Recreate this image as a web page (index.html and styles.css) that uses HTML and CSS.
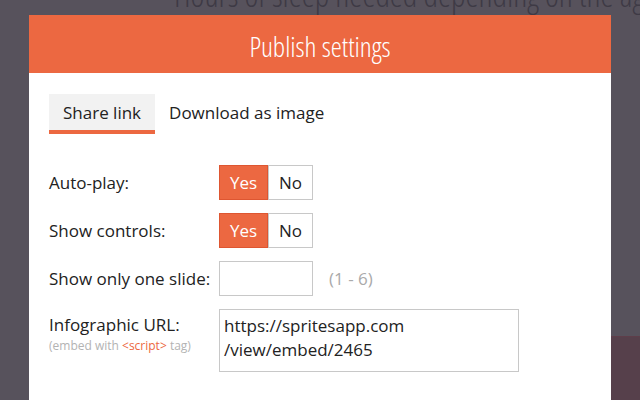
FILE: index.html
```html
<!DOCTYPE html>
<html>
<head>
<meta charset="utf-8">
<link rel="stylesheet" href="styles.css">
</head>
<body>
<div class="page">
  <h1 class="page-title">Hours of sleep needed depending on the age</h1>
  <div class="page-block"></div>
</div>
<div class="modal">
  <div class="modal-header">Publish settings</div>
  <div class="modal-body">
    <div class="tabs">
      <div class="tab active">Share link</div>
      <div class="tab">Download as image</div>
    </div>
    <div class="form">
      <div class="row">
        <div class="label">Auto-play:</div>
        <div class="toggle"><span class="opt on">Yes</span><span class="opt">No</span></div>
      </div>
      <div class="row">
        <div class="label">Show controls:</div>
        <div class="toggle"><span class="opt on">Yes</span><span class="opt">No</span></div>
      </div>
      <div class="row">
        <div class="label">Show only one slide:</div>
        <input class="num" type="text">
        <span class="hint">(1 - 6)</span>
      </div>
      <div class="row row-top">
        <div class="label">Infographic URL:<div class="sub">(embed with <span class="code">&lt;script&gt;</span> tag)</div></div>
        <textarea class="url" readonly>https://spritesapp.com
/view/embed/2465</textarea>
      </div>
    </div>
  </div>
</div>
</body>
</html>
```
FILE: styles.css
```css
html, body {
  margin: 0;
  padding: 0;
}
body {
  width: 640px;
  height: 400px;
  overflow: hidden;
  background: #57525c;
  font-family: "Open Sans", "Liberation Sans", sans-serif;
  position: relative;
}
.page {
  height: 400px;
  display: flex;
  flex-direction: column;
  justify-content: space-between;
  align-items: flex-end;
}
.page-title {
  margin: -26px 0 0 0;
  align-self: flex-start;
  padding-left: 174px;
  white-space: nowrap;
  font-family: "Open Sans", sans-serif;
  font-weight: 300;
  font-stretch: 75%;
  font-size: 33px;
  line-height: 42px;
  color: #3e3a45;
}
.page-block {
  width: 29px;
  height: 63px;
  background: #56404b;
  border-top: 1px solid #5e3e4a;
}
.modal {
  position: absolute;
  left: 29px;
  top: 15px;
  width: 582px;
  bottom: 0;
  background: #fff;
}
.modal-header {
  height: 58px;
  background: #ec6841;
  color: #fff;
  text-align: center;
  font-weight: 300;
  font-stretch: 75%;
  font-size: 28px;
  line-height: 62px;
}
.modal-body {
  padding: 21px 20px 0 20px;
}
.tabs {
  display: flex;
}
.tab {
  height: 36px;
  line-height: 38px;
  padding: 0 14px;
  font-size: 17px;
  color: #222;
  border-bottom: 4px solid transparent;
}
.tab.active {
  background: #f2f2f2;
  border-bottom-color: #ec6841;
}
.form {
  margin-top: 31px;
  display: flex;
  flex-direction: column;
  gap: 13px;
}
.row {
  display: flex;
  align-items: center;
  height: 35px;
}
.row-top {
  align-items: flex-start;
  height: auto;
}
.label {
  width: 170px;
  font-size: 17px;
  color: #222;
}
.row-top .label {
  padding-top: 5px;
  line-height: 22px;
}
.sub {
  font-size: 12px;
  color: #b3b3b3;
  line-height: 16px;
  margin-top: 2px;
}
.code {
  color: #ec6841;
}
.toggle {
  display: flex;
}
.opt {
  display: block;
  box-sizing: border-box;
  height: 35px;
  line-height: 33px;
  font-size: 17px;
  border: 1px solid #c8c8c8;
  color: #222;
  background: #fff;
  text-align: center;
  width: 45px;
}
.opt.on {
  width: 49px;
  background: #ec6841;
  border-color: #de5631;
  color: #fff;
}
.num {
  box-sizing: border-box;
  width: 94px;
  height: 35px;
  border: 1px solid #c8c8c8;
  margin: 0;
  padding: 0 6px;
  outline: none;
}
.hint {
  margin-left: 16px;
  font-size: 17px;
  color: #aaa;
}
.url {
  box-sizing: border-box;
  width: 300px;
  height: 63px;
  border: 1px solid #c8c8c8;
  margin: 0;
  padding: 4px 4px;
  font-family: "Open Sans", sans-serif;
  font-size: 17px;
  line-height: 24px;
  color: #222;
  resize: none;
  outline: none;
  overflow: hidden;
}
```
